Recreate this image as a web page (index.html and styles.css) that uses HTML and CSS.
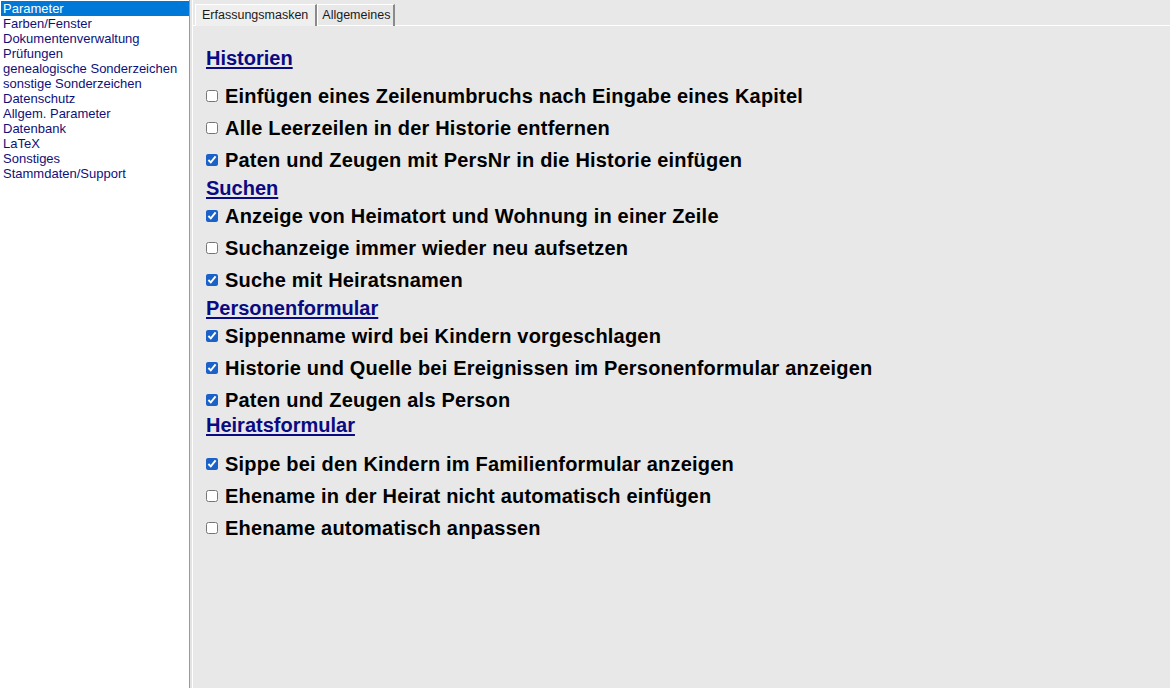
FILE: index.html
```html
<!DOCTYPE html>
<html lang="de">
<head>
    <meta charset="UTF-8">
    <title>Parameter</title>
    <link rel="stylesheet" href="styles.css">
</head>
<body>
    <div class="window">
        <ul class="nav-list">
            <li class="selected">Parameter</li>
            <li>Farben/Fenster</li>
            <li>Dokumentenverwaltung</li>
            <li>Prüfungen</li>
            <li>genealogische Sonderzeichen</li>
            <li>sonstige Sonderzeichen</li>
            <li>Datenschutz</li>
            <li>Allgem. Parameter</li>
            <li>Datenbank</li>
            <li>LaTeX</li>
            <li>Sonstiges</li>
            <li>Stammdaten/Support</li>
        </ul>

        <div class="splitter"></div>

        <div class="page">
            <div class="tabs">
                <div class="tab active">Erfassungsmasken</div>
                <div class="tab">Allgemeines</div>
            </div>

            <div class="sheet">
                <h2 class="section section-first">Historien</h2>
                <label class="option"><input type="checkbox"> Einfügen eines Zeilenumbruchs nach Eingabe eines Kapitel</label>
                <label class="option"><input type="checkbox"> Alle Leerzeilen in der Historie entfernen</label>
                <label class="option"><input type="checkbox" checked> Paten und Zeugen mit PersNr in die Historie einfügen</label>

                <h2 class="section">Suchen</h2>
                <label class="option"><input type="checkbox" checked> Anzeige von Heimatort und Wohnung in einer Zeile</label>
                <label class="option"><input type="checkbox"> Suchanzeige immer wieder neu aufsetzen</label>
                <label class="option"><input type="checkbox" checked> Suche mit Heiratsnamen</label>

                <h2 class="section">Personenformular</h2>
                <label class="option"><input type="checkbox" checked> Sippenname wird bei Kindern vorgeschlagen</label>
                <label class="option"><input type="checkbox" checked> Historie und Quelle bei Ereignissen im Personenformular anzeigen</label>
                <label class="option"><input type="checkbox" checked> Paten und Zeugen als Person</label>

                <h2 class="section section-spaced">Heiratsformular</h2>
                <label class="option"><input type="checkbox" checked> Sippe bei den Kindern im Familienformular anzeigen</label>
                <label class="option"><input type="checkbox"> Ehename in der Heirat nicht automatisch einfügen</label>
                <label class="option"><input type="checkbox"> Ehename automatisch anpassen</label>
            </div>
        </div>
    </div>
</body>
</html>
```

FILE: styles.css
```css
html, body {
    margin: 0;
    height: 100%;
}
body {
    font-family: "Liberation Sans", Arial, sans-serif;
    background: #ffffff;
    color: #000000;
}
.window {
    display: flex;
    height: 688px;
    overflow: hidden;
}

/* linke Liste */
.nav-list {
    list-style: none;
    margin: 0;
    padding: 1px 0 0 1px;
    width: 189px;
    box-sizing: border-box;
    background: #ffffff;
    flex-shrink: 0;
}
.nav-list li {
    font-size: 13px;
    line-height: 15px;
    height: 15px;
    padding-left: 2px;
    color: #10107a;
    white-space: nowrap;
}
.nav-list li.selected {
    background: #0078d7;
    color: #ffffff;
}

.splitter {
    width: 4px;
    flex-shrink: 0;
    border-left: 1px solid #9a9a9a;
    border-right: 1px solid #ffffff;
    background: #e3e3e3;
    box-sizing: border-box;
}

/* rechte Seite */
.page {
    flex: 1;
    background: #e8e8e8;
    display: flex;
    flex-direction: column;
}
.tabs {
    display: flex;
    padding: 4px 0 0 2px;
    height: 26px;
    box-sizing: border-box;
    border-bottom: 1px solid #ffffff;
}
.tab {
    font-size: 12.5px;
    color: #1a1a1a;
    height: 22px;
    line-height: 21px;
    padding: 0 3px 0 4px;
    border-top: 1px solid #ffffff;
    border-left: 1px solid #ffffff;
    border-right: 2px solid #8a8a8a;
    box-sizing: border-box;
}
.tab.active {
    background: #efefef;
    padding: 0 7px 0 6px;
}

.sheet {
    padding: 20px 0 0 13px;
}
.section {
    margin: 0;
    height: 24px;
    line-height: 24px;
    font-size: 20px;
    font-weight: bold;
    color: #0a0a82;
    text-decoration: underline;
    text-underline-offset: 2px;
}
.section-first {
    margin-bottom: 10px;
}
.section-spaced {
    margin-top: -3px;
    margin-bottom: 11px;
}
.option {
    display: flex;
    align-items: center;
    height: 32px;
    font-size: 20px;
    letter-spacing: 0.2px;
    font-weight: bold;
    white-space: nowrap;
}
.option input {
    width: 12px;
    height: 12px;
    margin: 0 7px 0 0;
    accent-color: #1a62c8;
}
```
